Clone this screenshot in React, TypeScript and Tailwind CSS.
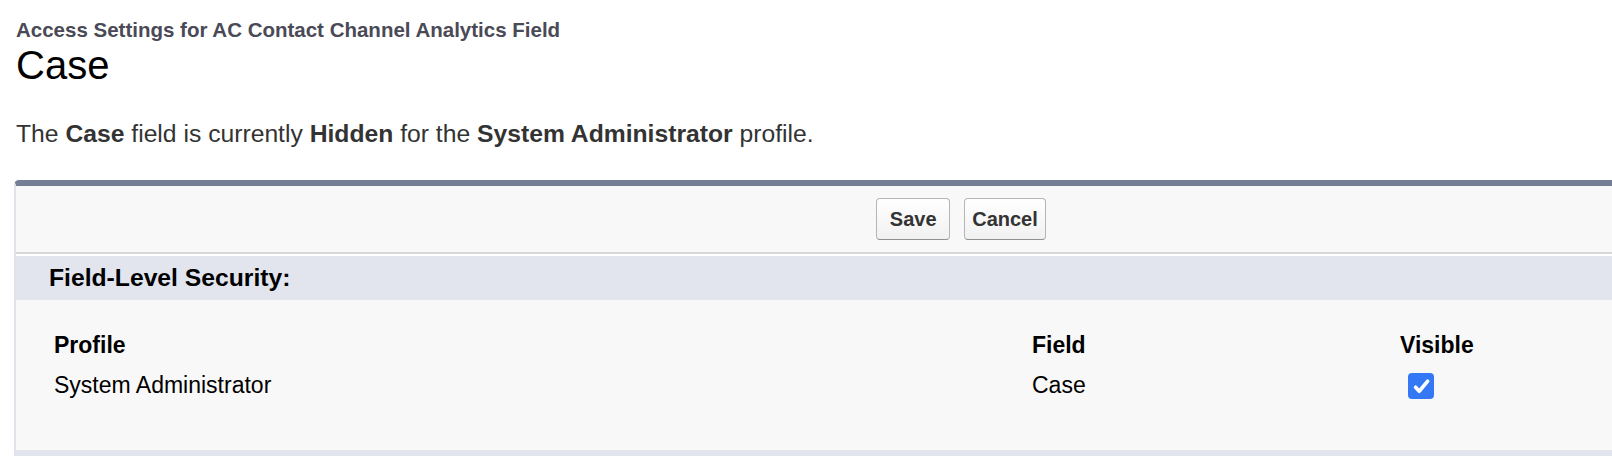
import React from "react";

export default function App() {
  return (
    <div className="w-[1612px] h-[456px] overflow-hidden bg-white font-['Liberation_Sans',Arial,Helvetica,sans-serif]">
      {/* page header */}
      <div className="pl-4 pt-[18px]">
        <div className="text-[20.5px] leading-[24px] font-bold text-[#4a4a56]">
          Access Settings for AC Contact Channel Analytics Field
        </div>
        <h1 className="text-[40px] leading-[46px] text-black">Case</h1>
      </div>

      <p className="pl-4 mt-[32px] text-[24.7px] leading-[28px] text-[#333]">
        The <b>Case</b> field is currently <b>Hidden</b> for the{" "}
        <b>System Administrator</b> profile.
      </p>

      {/* edit panel */}
      <div className="ml-[14px] mt-[32px] w-[1894px] rounded-tl-[5px] border-t-[6px] border-t-[#747e96] border-l-2 border-r-2 border-l-[#e0e3ea] border-r-[#e0e3ea] border-b-[6px] border-b-[#e2e5ee] bg-[#f8f8f8]">
        <div className="h-[68px] flex items-center justify-center gap-[14px] border-b-2 border-[#d8d8d8]">
          <button className="h-[42px] min-w-[74px] px-[7px] rounded-[4px] border border-[#b5b5b5] border-b-[#8f8f8f] bg-linear-to-b from-white to-[#f1f1f1] text-[20px] font-bold text-[#333]">
            Save
          </button>
          <button className="h-[42px] min-w-[74px] px-[7px] rounded-[4px] border border-[#b5b5b5] border-b-[#8f8f8f] bg-linear-to-b from-white to-[#f1f1f1] text-[20px] font-bold text-[#333]">
            Cancel
          </button>
        </div>

        <div className="border-t-2 border-white h-[46px] bg-[#e2e5ee] pl-[33px] flex items-center">
          <h3 className="text-[24.7px] font-bold text-black">Field-Level Security:</h3>
        </div>

        {/* profile table */}
        <div className="pl-[38px] pt-[32px] pb-[51px] text-[23px] leading-[26px] text-black">
          <div className="grid grid-cols-[978px_368px_1fr] gap-y-[14px]">
            <div className="font-bold">Profile</div>
            <div className="font-bold">Field</div>
            <div className="font-bold">Visible</div>
            <div>System Administrator</div>
            <div>Case</div>
            <div className="pl-[8px] pt-px">
              <span className="w-[26px] h-[26px] rounded-[4px] bg-[#3478f6] flex items-center justify-center">
                <svg width="19" height="19" viewBox="0 0 16 16" fill="none">
                  <path d="M3 8.6l3.1 3.4L13.2 3.4" stroke="white" strokeWidth="3" strokeLinecap="round" strokeLinejoin="round" />
                </svg>
              </span>
            </div>
          </div>
        </div>
      </div>
    </div>
  );
}
